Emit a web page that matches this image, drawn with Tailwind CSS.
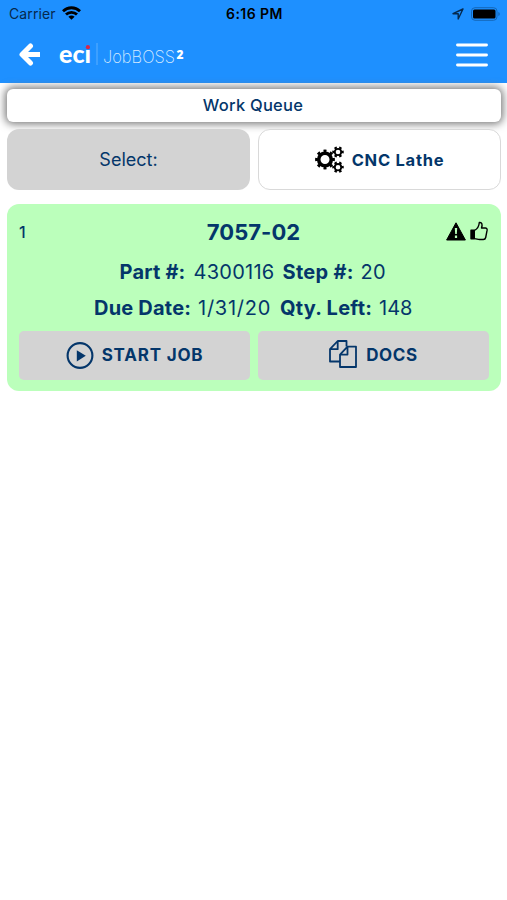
<!DOCTYPE html>
<html lang="en">
<head>
    <meta charset="UTF-8">
    <meta name="viewport" content="width=device-width, initial-scale=1.0">
    <title>Work Queue</title>
    <script src="https://cdn.jsdelivr.net/npm/@tailwindcss/browser@4"></script>
</head>
<body class="h-[900px] overflow-hidden bg-white font-['Inter',sans-serif] text-[#04366a]">
    <header class="h-[82.5px] bg-[#1e90ff]">
        <!-- Status bar -->
        <div class="grid h-7 grid-cols-3 items-center pl-[9px] pr-[7px] text-sm text-black">
            <div class="flex items-center gap-[6px]">
                <span class="tracking-[0.1px] text-[#06294d]">Carrier</span>
                <svg class="mt-[-2px] h-[14px] w-[19px]" viewBox="0 0 19 14" fill="none" stroke="#000" stroke-width="2.8">
                    <path d="M1 5.2C5.8.6 13.2.6 18 5.2M4 8.600c3-3 8-3 11 0"/>
                    <path d="M9.500 13.800 6.400 10.700Q9.500 8.400 12.600 10.700Z" fill="#000" stroke="none"/>
                </svg>
            </div>
            <div class="text-center font-semibold tracking-[0.45px]">6:16 PM</div>
            <div class="flex items-center justify-end gap-[7px]">
                <svg class="h-3 w-3" viewBox="0 0 12 12" fill="none" stroke="#05294e" stroke-width="1.400" stroke-linejoin="round">
                    <path d="M11 1 1 5.700h5.200V11Z"/>
                </svg>
                <svg class="mt-[-1px] h-[14px] w-[29px]" viewBox="0 0 29 14">
                    <rect x=".5" y=".7" width="25.500" height="12.600" rx="3.500" fill="none" stroke="#1467b8" stroke-width="1"/>
                    <rect x="2" y="2.500" width="22.500" height="9" rx="1.500" fill="#000"/>
                    <path d="M27.300 5v4q1.500-.6 1.500-2t-1.500-2Z" fill="#1467b8"/>
                </svg>
            </div>
        </div>
        <!-- Nav bar -->
        <div class="flex h-[53px] items-center pl-[19px] pr-[19px]">
            <svg class="h-[23px] w-[22px] shrink-0" viewBox="0 0 22 23" fill="none" stroke="#fff" stroke-width="5">
                <path d="M11.500 3 3 11.500l8.500 8.500" stroke-linejoin="round" stroke-linecap="round"/>
                <path d="M4 11.500H21"/>
            </svg>
            <svg class="ml-[14px] h-[34px] w-[134px]" viewBox="-4 -4 134 34" fill="#fff">
                <text x="0" y="20.700" font-family="Lato, sans-serif" font-weight="900" font-size="25" textLength="32" lengthAdjust="spacingAndGlyphs">ecı</text>
                <circle cx="28.900" cy="5.200" r="2.100" fill="#d8284a"/>
                <path d="M38 1v22" stroke="#5dafff" stroke-width="1"/>
                <text x="44" y="21" font-family="Inter, sans-serif" font-weight="200" font-size="17.500" textLength="72" lengthAdjust="spacingAndGlyphs" fill="#d5eaff">JobBOSS</text>
                <text x="117.500" y="17" font-family="Open Sans, sans-serif" font-weight="800" font-size="12" textLength="7" lengthAdjust="spacingAndGlyphs">2</text>
            </svg>
            <svg class="ml-auto h-6 w-8" viewBox="0 0 32 24" fill="none" stroke="#fff" stroke-width="2.900" stroke-linecap="round">
                <path d="M1.500 2h29M1.500 12h29M1.500 22h29"/>
            </svg>
        </div>
    </header>

    <main class="px-[7px] pr-[6px] pt-[6px]">
        <h1 class="flex h-[33.500px] items-center justify-center rounded-[6px] bg-white pr-[2px] text-[16.500px] font-medium tracking-[0.250px] shadow-[0_0_8px_2px_#777]">Work Queue</h1>

        <div class="mt-[7px] grid grid-cols-2 gap-2">
            <div class="relative flex h-[61px] items-center justify-center rounded-xl bg-[#d3d3d3] text-[18px]">Select:</div>
            <div class="relative flex h-[61px] items-center justify-center gap-[7px] rounded-xl border border-[#d9d9d9] bg-white font-bold">
                <!-- Gears: solid ring plus dashed ring for the teeth -->
                <svg class="h-[28px] w-[30px]" viewBox="0 0 30 28" fill="none" stroke="#000">
                    <circle cx="10" cy="13.500" r="6.300" stroke-width="3.600"/>
                    <circle cx="10" cy="13.500" r="8.500" stroke-width="2.800" pathLength="80" stroke-dasharray="4.500 5.500" stroke-dashoffset="2.250"/>
                    <circle cx="23" cy="6" r="3.200" stroke-width="1.800"/>
                    <circle cx="23" cy="6" r="4.700" stroke-width="2.100" pathLength="60" stroke-dasharray="5 5" stroke-dashoffset="2.500"/>
                    <circle cx="23" cy="21.200" r="3.200" stroke-width="1.800"/>
                    <circle cx="23" cy="21.200" r="4.700" stroke-width="2.100" pathLength="60" stroke-dasharray="5 5" stroke-dashoffset="2.500"/>
                </svg>
                <span class="pt-px text-[16.500px] tracking-[0.750px]">CNC Lathe</span>
            </div>
        </div>

        <section class="mt-[14px] h-[187px] rounded-xl bg-[#bbffbb] px-3 pt-[10px]">
            <div class="grid h-9 grid-cols-3 items-center">
                <span class="text-[16px] font-medium">1</span>
                <span class="-ml-px text-center text-[22px] font-bold tracking-[0.050px]">7057-02</span>
                <div class="flex items-center justify-end gap-[4px] pr-[1px] pb-[2px]">
                    <svg class="h-[19px] w-[20px]" viewBox="0 0 20 19">
                        <path d="M10 .8 19.400 18H.6Z" fill="#000" stroke="#000" stroke-linejoin="round"/>
                        <path d="M8.800 6h2.400l-.4 6H9.200ZM8.900 13.600h2.200v2.300H8.900Z" fill="#bbffbb"/>
                    </svg>
                    <svg class="h-[20px] w-[18px]" viewBox="0 0 18 20" fill="none" stroke="#000" stroke-width="1.400" stroke-linejoin="round">
                        <path d="M1 9.300h3.300v8.500H1Z" fill="#000"/>
                        <path d="M4.500 9.300C7.500 8 9 5 9.300 1.500c2.700-.5 3.400 1.800 2.200 5.500h3.800c1.400 0 2 .9 1.800 2.200l-1.400 7.300c-.3 1.400-1 2-2.400 2H9.500c-1.800 0-3-.9-5-.9"/>
                    </svg>
                </div>
            </div>

            <div class="flex h-9 items-center justify-center pr-[2px] pt-[8px] text-[20px]">
                <b class="w-[74px] tracking-[0.200px]">Part #:</b>
                <span class="w-[89px] tracking-[0.250px]">4300116</span>
                <b class="w-[78px] tracking-[0.300px]">Step #:</b>
                <span class="w-[26px] tracking-[0.200px]">20</span>
            </div>
            <div class="flex h-9 items-center justify-center pr-[2px] pt-[7px] text-[20px]">
                <b class="w-[104px] tracking-[0.200px]">Due Date:</b>
                <span class="w-[82px] tracking-[0.750px]">1/31/20</span>
                <b class="w-[99px] tracking-[0.250px]">Qty. Left:</b>
                <span class="w-[33px]">148</span>
            </div>

            <div class="mt-[9px] grid grid-cols-2 gap-2 text-[17px] font-bold">
                <button class="flex h-[49px] items-center justify-center gap-[8px] rounded-[5px] bg-[#d3d3d3]">
                    <svg class="h-[28px] w-[28px]" viewBox="0 0 28 28" fill="none" stroke="#04366a" stroke-width="2.100">
                        <circle cx="14" cy="13.500" r="12.400"/>
                        <path d="M10.800 8.200v11.300l9-5.650Z" fill="#04366a" stroke="none"/>
                    </svg>
                    <span class="tracking-[0.800px]">START JOB</span>
                </button>
                <button class="flex h-[49px] items-center justify-center gap-[9px] rounded-[5px] bg-[#d3d3d3]">
                    <svg class="mt-[-3px] h-[28px] w-[28px]" viewBox="0 0 28 28" fill="none" stroke="#04366a" stroke-width="1.800" stroke-linejoin="round">
                        <path d="M11 21.500H1V9.200L8.700 1H17.500V6.500M8.700 1V9.200H1"/>
                        <path d="M18.500 6.600H27V27H11V14.600ZM18.500 6.600V14.600H11"/>
                    </svg>
                    <span class="tracking-[0.650px]">DOCS</span>
                </button>
            </div>
        </section>
    </main>
</body>
</html>
